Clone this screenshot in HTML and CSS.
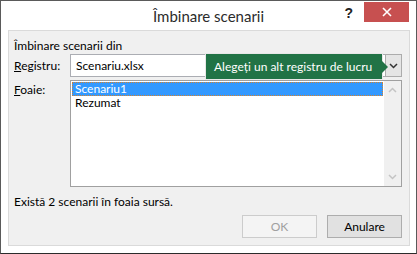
FILE: index.html
```html
<!DOCTYPE html>
<html lang="ro">
<head>
    <meta charset="UTF-8">
    <title>Îmbinare scenarii</title>
    <link rel="stylesheet" href="styles.css">
</head>
<body>

<div class="window">
    <div class="titlebar">
        <span></span>
        <h1 class="title">Îmbinare scenarii</h1>
        <div class="controls">
            <span class="help">?</span>
            <span class="close">
                <svg width="10" height="10" viewBox="0 0 10 10">
                    <path d="M1 1 L9 9 M9 1 L1 9" stroke="#fff" stroke-width="1.6"/>
                </svg>
            </span>
        </div>
    </div>

    <div class="panel">
        <p class="heading">Îmbinare scenarii din</p>

        <div class="row">
            <label class="label"><u>R</u>egistru:</label>
            <div class="combo">
                <div class="combo-text">Scenariu.xlsx</div>
                <div class="combo-btn">
                    <svg width="9" height="6" viewBox="0 0 9 6">
                        <path d="M1 1 L4.5 4.5 L8 1" fill="none" stroke="#333" stroke-width="1.5"/>
                    </svg>
                </div>
                <!-- tooltip over the textbox -->
                <div class="tooltip">Alegeți un alt registru de lucru</div>
            </div>
        </div>

        <div class="row row-list">
            <label class="label label-top"><u>F</u>oaie:</label>
            <div class="listbox">
                <ul class="items">
                    <li class="item selected">Scenariu1</li>
                    <li class="item">Rezumat</li>
                </ul>
                <div class="scrollbar">
                    <svg width="9" height="6" viewBox="0 0 9 6">
                        <path d="M1 5 L4.5 1.5 L8 5" fill="none" stroke="#c4c4c4" stroke-width="1.5"/>
                    </svg>
                    <svg width="9" height="6" viewBox="0 0 9 6">
                        <path d="M1 1 L4.5 4.5 L8 1" fill="none" stroke="#c4c4c4" stroke-width="1.5"/>
                    </svg>
                </div>
            </div>
        </div>

        <p class="status">Există 2 scenarii în foaia sursă.</p>

        <div class="buttons">
            <button class="btn" disabled>OK</button>
            <button class="btn">Anulare</button>
        </div>
    </div>
</div>

</body>
</html>
```

FILE: styles.css
```css
body {
    margin: 0;
    padding: 0;
    font-family: Lato, 'Liberation Sans', sans-serif;
    font-size: 12px;
    color: #000;
    background-color: #fff;
}
.window {
    width: 417px;
    height: 254px;
    box-sizing: border-box;
    border: 1px solid #5a5a5a;
    border-bottom-color: #2b2b2b;
    background-color: #fff;
}
/* Title bar */
.titlebar {
    height: 29px;
    display: grid;
    grid-template-columns: 1fr auto 1fr;
    align-items: start;
}
.title {
    margin: 0;
    padding-top: 6px;
    font-size: 15px;
    font-weight: normal;
    color: #2b2b2b;
    line-height: 18px;
}
.controls {
    justify-self: end;
    display: flex;
    align-items: flex-start;
    margin-right: 7px;
    padding-top: 1px;
}
.help {
    font-family: 'Liberation Sans', sans-serif;
    font-weight: bold;
    font-size: 14px;
    line-height: 22px;
    color: #222;
    margin-right: 11px;
}
.close {
    width: 45px;
    height: 20px;
    background-color: #c75050;
    display: flex;
    align-items: center;
    justify-content: center;
}
/* Client area */
.panel {
    margin: 0 6px 0 7px;
    height: 216px;
    box-sizing: border-box;
    border: 1px solid #dadada;
    background-color: #f0f0f0;
    padding: 7px 7px 7px 5px;
}
.heading {
    margin: 0;
    line-height: 15px;
}
.row {
    display: grid;
    grid-template-columns: 56px 1fr;
    align-items: center;
    margin-top: 1px;
}
.row-list {
    margin-top: 3px;
    align-items: start;
}
.label-top {
    padding-top: 2px;
}
/* Combo box */
.combo {
    position: relative;
    display: flex;
    height: 23px;
}
.combo-text {
    flex: 1;
    box-sizing: border-box;
    border: 1px solid #abadb3;
    border-right: none;
    background-color: #fff;
    padding-left: 5px;
    line-height: 21px;
}
.combo-btn {
    width: 17px;
    box-sizing: border-box;
    border: 1px solid #acacac;
    background-color: #e5e5e5;
    display: flex;
    align-items: center;
    justify-content: center;
}
.tooltip {
    position: absolute;
    left: 135px;
    top: -1px;
    width: 178px;
    height: 27px;
    box-sizing: border-box;
    padding-left: 8px;
    line-height: 25px;
    font-size: 12px;
    white-space: nowrap;
    color: #fff;
    background-color: #217346;
    border: 1px solid #e8e8e8;
}
.tooltip::after {
    content: "";
    position: absolute;
    right: -6px;
    top: 7px;
    border-top: 6px solid transparent;
    border-bottom: 6px solid transparent;
    border-left: 6px solid #217346;
}
/* List box */
.listbox {
    height: 107px;
    box-sizing: border-box;
    border: 1px solid #a0a0a0;
    background-color: #fff;
    display: flex;
}
.items {
    flex: 1;
    list-style: none;
    margin: 0;
    padding: 1px 1px;
}
.item {
    padding-left: 3px;
    line-height: 14px;
}
.selected {
    background-color: #3399ff;
    color: #fff;
    outline: 1px dotted #d9822b;
    outline-offset: -1px;
}
.scrollbar {
    width: 17px;
    background-color: #f0f0f0;
    display: flex;
    flex-direction: column;
    justify-content: space-between;
    align-items: center;
    padding: 6px 0;
}
.status {
    margin: 7px 0 0;
    line-height: 15px;
}
/* Buttons */
.buttons {
    display: flex;
    justify-content: flex-end;
    gap: 10px;
    margin-top: 6px;
}
.btn {
    width: 75px;
    height: 23px;
    font-family: inherit;
    font-size: 12px;
    border: 1px solid #adadad;
    background-color: #e1e1e1;
    color: #000;
    padding: 0;
}
.btn:disabled {
    border-color: #cccccc;
    background-color: #f4f4f4;
    color: #a0a0a0;
}
```
